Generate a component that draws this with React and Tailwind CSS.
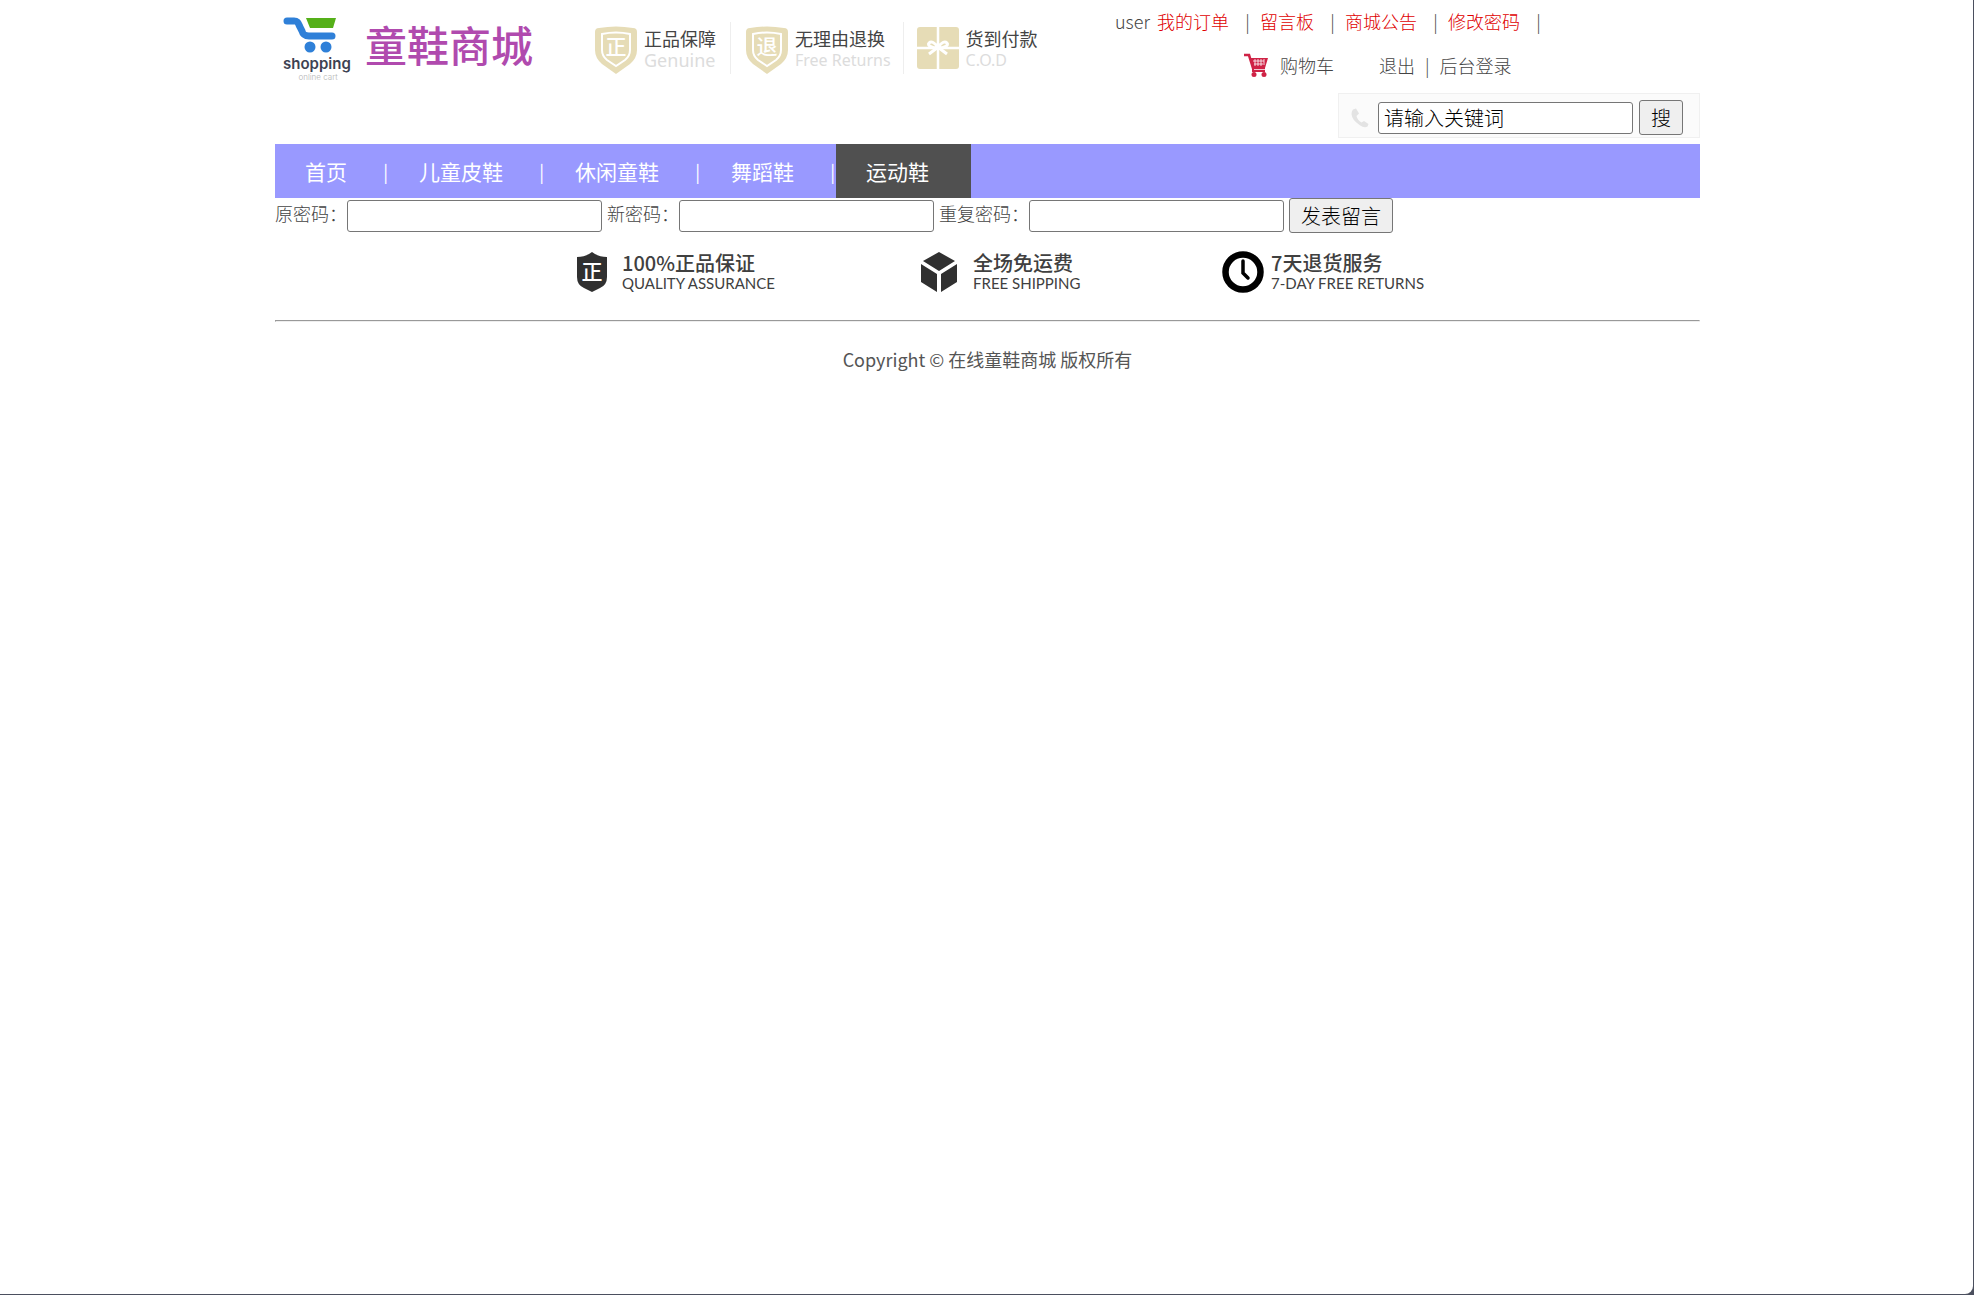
const topLinks = ['我的订单', '留言板', '商城公告', '修改密码']

const categories = [
  { name: '首页' },
  { name: '儿童皮鞋' },
  { name: '休闲童鞋' },
  { name: '舞蹈鞋' },
  { name: '运动鞋', active: true },
]

const passwordFields = [
  { id: 'old-password', label: '原密码：' },
  { id: 'new-password', label: '新密码：' },
  { id: 'repeat-password', label: '重复密码：' },
]

function CartLogo() {
  return (
    <svg viewBox="0 0 54 36" className="h-9 w-[54px]" aria-hidden="true">
      <path d="M23 1h30l-3 10H27z" fill="#55b019" />
      <path
        d="M4 4h7c4 0 4 2 6 6l2 4c1 4 3 5 7 5h23"
        fill="none"
        stroke="#2f80d8"
        strokeWidth="7"
        strokeLinecap="round"
        strokeLinejoin="round"
      />
      <circle cx="27" cy="30" r="5.5" fill="#2f80d8" />
      <circle cx="43" cy="30" r="5.5" fill="#2f80d8" />
    </svg>
  )
}

function BeigeShield({ char }) {
  return (
    <svg viewBox="0 0 44 48" className="h-12 w-11 shrink-0" aria-hidden="true">
      <path d="M5 2Q22-1 39 2q4 0 4 4v18q0 8-7 14-7 5-14 10-7-5-14-10-7-6-7-14V6q0-4 4-4z" fill="#e6dcb6" />
      <path d="M8 8q14-3 28 0v16q0 6-5 10l-9 6-9-6q-5-4-5-10z" fill="none" stroke="#fff" strokeWidth="2" />
      <text x="22" y="28" textAnchor="middle" fontSize="21" fontWeight="500" fill="#fff">{char}</text>
    </svg>
  )
}

function Gift() {
  return (
    <svg viewBox="0 0 44 44" className="h-11 w-11 shrink-0" aria-hidden="true">
      <rect x="1" y="1" width="42" height="42" rx="3" fill="#e6dcb6" />
      <path d="M22 1v42M1 22h42" stroke="#fff" strokeWidth="2.5" />
      <path
        d="M22 22c-3-6-7-7-9-5s2 5 9 5c7 0 11-3 9-5s-6-1-9 5zM21 22l-8 6M23 22l8 6"
        fill="none"
        stroke="#fff"
        strokeWidth="3"
      />
    </svg>
  )
}

function RedCart() {
  return (
    <svg viewBox="0 0 24 24" className="h-6 w-6" aria-hidden="true">
      <path d="M0 2h5l4 13h12" fill="none" stroke="#cf2346" strokeWidth="2.6" />
      <path d="M6 5h18l-3 10H9z" fill="#cf2346" />
      <path d="M9 8h11M10 11h9M11 6v7M14 6v7M17 6v7M20 6v6" stroke="#fff" strokeWidth=".8" />
      <path d="M9 15v3h12" fill="none" stroke="#cf2346" strokeWidth="2" />
      <circle cx="10" cy="21.5" r="2.5" fill="#cf2346" />
      <circle cx="20" cy="21.5" r="2.5" fill="#cf2346" />
    </svg>
  )
}

function Phone() {
  return (
    <svg viewBox="0 0 18 20" className="h-5 w-[18px]" aria-hidden="true">
      <path
        d="M2 1.5 5 .5 8 5.5 5.5 8q1 4 5 6.5l2.5-1.5 4.5 3-1 2.5q-3 2-8-1.5Q1 12 .5 6 .5 3 2 1.5z"
        fill="#e3e3e3"
      />
    </svg>
  )
}

function DarkShield() {
  return (
    <svg viewBox="0 0 30 40" className="h-10 w-[30px]" aria-hidden="true">
      <path d="M15 0q6 5 15 5v20q0 8-7 11l-8 4-8-4q-7-3-7-11V5q9 0 15-5z" fill="#303030" />
      <text x="15" y="27" textAnchor="middle" fontSize="21" fontWeight="500" fill="#fff">正</text>
    </svg>
  )
}

function Box() {
  return (
    <svg viewBox="0 0 38 40" className="h-10 w-[38px]" aria-hidden="true">
      <path d="M19 0l16 9-16 10L3 9zM1 12l16 10v18L1 30zM37 12L21 22v18l16-10z" fill="#303030" />
    </svg>
  )
}

function Clock() {
  return (
    <svg viewBox="0 0 42 42" className="h-[42px] w-[42px]" aria-hidden="true">
      <circle cx="21" cy="21" r="17.5" fill="none" stroke="#000" strokeWidth="6.5" />
      <path d="M21 10v12l5 5" fill="none" stroke="#000" strokeWidth="3.5" strokeLinecap="round" />
    </svg>
  )
}

function Badge({ icon, title, children }) {
  return (
    <div className="flex gap-[6px] pt-1">
      {icon}
      <div>
        <p className="text-[18px] leading-6 text-[#444]">{title}</p>
        {children}
      </div>
    </div>
  )
}

function Service({ icon, title, sub, gap = 'gap-[15px]' }) {
  return (
    <div className={`flex items-center ${gap}`}>
      {icon}
      <div className="text-[#404040]">
        <p className="text-[20px] leading-[22px] font-medium">{title}</p>
        <p className="font-['Lato','Noto_Sans_CJK_SC',sans-serif] text-[15px] leading-[18px]">{sub}</p>
      </div>
    </div>
  )
}

function Header() {
  return (
    <header className="flex min-h-36">
      <div className="flex w-[319px] shrink-0 items-start pt-[17px] pl-2">
        <div className="flex w-[70px] flex-col items-start">
          <CartLogo />
          <span className="pt-[2px] font-['Inter',sans-serif] text-[15px] leading-[18px] font-semibold text-[#3d4252]">shopping</span>
          <span className="self-center font-['Inter',sans-serif] text-[8px] leading-[8px] text-[#b5b5b5]">online cart</span>
        </div>
        <h1 className="ml-3 text-[42px] leading-[54px] font-medium text-[#b04aae]">童鞋商城</h1>
      </div>

      <div className="flex w-[521px] shrink-0 items-start pt-[22px] font-normal">
        <Badge icon={<BeigeShield char="正" />} title="正品保障">
          <p className="font-['Noto_Sans',sans-serif] text-[18px] leading-5 text-[#dcdcdc]">Genuine</p>
        </Badge>
        <div className="mx-[14px] h-[52px] w-px bg-[#eee]" />
        <Badge icon={<BeigeShield char="退" />} title="无理由退换">
          <p className="font-['Noto_Sans',sans-serif] text-[16px] leading-5 text-[#dcdcdc]">Free Returns</p>
        </Badge>
        <div className="mx-[12px] h-[52px] w-px bg-[#eee]" />
        <Badge icon={<Gift />} title="货到付款">
          <p className="font-['Noto_Sans',sans-serif] text-[16px] leading-5 text-[#dcdcdc]">C.O.D</p>
        </Badge>
      </div>

      <div className="flex grow flex-col text-[18px] leading-[26px]">
        <div className="flex pt-2">
          <span className="pr-[7px]">user</span>
          {topLinks.map((link) => (
            <span key={link} className="flex">
              <a href="#" className="text-[#e00000]">{link}</a>
              <span className="w-[31px] pr-[10px] text-right">|</span>
            </span>
          ))}
        </div>
        <div className="flex items-center pt-[18px] pl-[129px]">
          <RedCart />
          <a href="#" className="pl-3">购物车</a>
          <a href="#" className="pl-[45px]">退出</a>
          <span className="px-[10px]">|</span>
          <a href="#">后台登录</a>
        </div>
        <form className="mt-[15px] flex items-center self-end border border-[#f0f0f0] bg-[#fbfbfb] pt-[6px] pr-4 pb-[2px] pl-3">
          <Phone />
          <input
            type="text"
            aria-label="搜索"
            defaultValue="请输入关键词"
            className="ml-[9px] h-8 w-[255px] rounded-[3px] border border-[#767676] bg-white px-[5px] text-[20px] text-black"
          />
          <button type="button" className="ml-[6px] h-[35px] w-11 rounded-[3px] border border-[#767676] bg-[#efefef] text-[20px] leading-[30px] text-black">
            搜
          </button>
        </form>
      </div>
    </header>
  )
}

export default function App() {
  return (
    <div className="flex min-h-screen bg-[#4b4f5e] pr-px pb-px font-['Noto_Sans_CJK_SC',sans-serif] font-light text-[#444]">
      <div className="grow rounded-br-lg bg-white pl-0.5">
        <div className="mx-auto max-w-[1425px]">
          <Header />

          <nav className="flex bg-[#9999ff] text-[21px] leading-[54px] font-normal text-white">
            {categories.map((item) => (
              <div key={item.name} className={item.active ? 'flex bg-[#505050] pr-[42px]' : 'flex'}>
                <a href="#" className="pl-[30px]">{item.name}</a>
                {!item.active && <span className="w-[42px] pr-px text-right text-[18px]">|</span>}
              </div>
            ))}
          </nav>

          <form className="flex items-center gap-[5px] text-[18px]">
            {passwordFields.map((field) => (
              <div key={field.id} className="flex items-center">
                <label htmlFor={field.id} className="pb-[6px] leading-[26px]">{field.label}</label>
                <input
                  id={field.id}
                  type="password"
                  className="h-8 w-[255px] rounded-[3px] border border-[#767676] bg-white px-[5px] text-[20px] text-black"
                />
              </div>
            ))}
            <button type="button" className="h-[35px] w-[104px] rounded-[3px] border border-[#767676] bg-[#efefef] text-[20px] leading-[30px] text-black">
              发表留言
            </button>
          </form>

          <section className="grid grid-cols-[343px_302px_auto] pt-[18px] pb-[27px] pl-[302px] font-normal">
            <Service icon={<DarkShield />} title="100%正品保证" sub="QUALITY ASSURANCE" />
            <Service icon={<Box />} title="全场免运费" sub="FREE SHIPPING" />
            <Service icon={<Clock />} title="7天退货服务" sub="7-DAY FREE RETURNS" gap="gap-[7px]" />
          </section>

          <footer>
            <hr className="h-[2px] border border-t-[#999] border-r-[#eee] border-b-[#eee] border-l-[#999]" />
            <p className="pt-[24px] text-center text-[18px] leading-[26px] font-normal text-[#555]">Copyright © 在线童鞋商城 版权所有</p>
          </footer>
        </div>
      </div>
    </div>
  )
}
